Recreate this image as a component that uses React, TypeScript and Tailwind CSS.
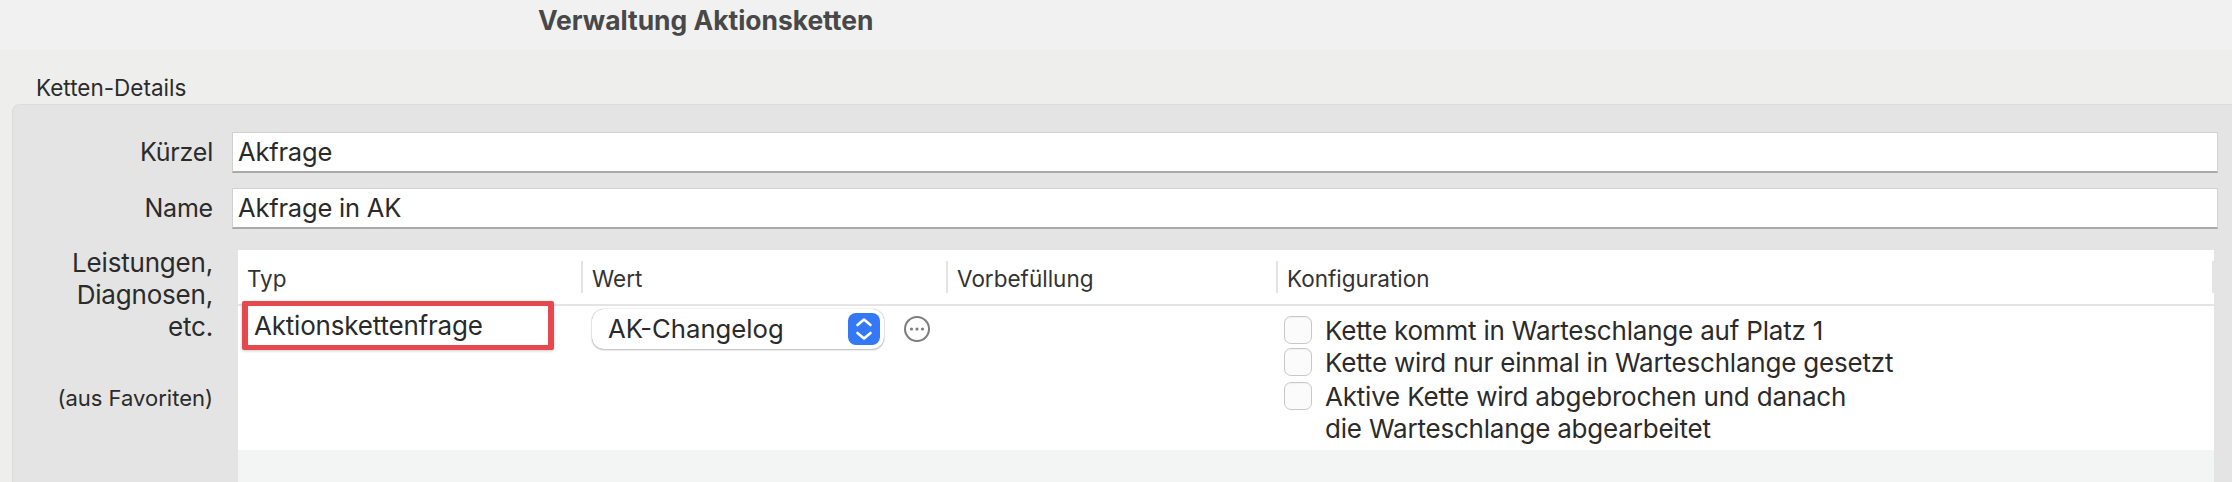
const fontClass = "font-['Inter','Liberation_Sans',sans-serif]"

const columnSeparator = 'h-[32px] w-[2px] bg-[#e4e4e4]'
const fieldLabel = 'w-[200px] text-right text-[25px] leading-[41px] tracking-[-0.2px] text-[#2b2b2b]'
const fieldInput =
  'ml-[19px] flex h-[41px] flex-1 items-center border-t border-x border-[#d2d2d2] border-b-2 border-b-[#a9a9a9] bg-white pl-[5px] text-[25.5px] tracking-[-0.2px] text-[#2a2a2a]'

function HeaderCell({ label, width, last }: { label: string; width: string; last?: boolean }) {
  return (
    <div className={`flex items-center ${width}`}>
      <span className="flex-1 pt-[4px] pl-[9px] text-[22.5px] text-[#333333]">{label}</span>
      {!last && <div className={columnSeparator} />}
    </div>
  )
}

function ConfigOption({ lines, className }: { lines: string[]; className?: string }) {
  return (
    <div className={`flex ${className ?? ''}`}>
      <div className="mt-px h-[28px] w-[28px] rounded-[7px] border border-[#c8c8c8] bg-[#fbfbfb] shadow-[inset_0_1px_1px_rgba(0,0,0,0.04)]" />
      <div className="ml-[13px] text-[26px] leading-[32px] tracking-[-0.2px] text-[#2b2b2b]">
        {lines.map((line) => (
          <div key={line}>{line}</div>
        ))}
      </div>
    </div>
  )
}

export default function App() {
  return (
    <div className={`flex h-[482px] w-[2232px] flex-col overflow-hidden bg-[#eeeeec] ${fontClass}`}>
      {/* Title */}
      <div className="flex h-[50px] shrink-0 items-center bg-[#f1f1f1] pb-[8px] pl-[538px] text-[26.4px] font-bold text-[#484848]">
        Verwaltung Aktionsketten
      </div>

      {/* Section heading */}
      <div className="flex h-[54px] shrink-0 items-end pl-[36px] text-[22.5px] leading-[32px] text-[#2b2b2b]">
        Ketten-Details
      </div>

      {/* Panel */}
      <div className="ml-[12px] min-h-0 flex-1 rounded-tl-[8px] border-t border-l border-[#dcdcda] bg-[#e4e4e4] pt-[27px] pr-[14px]">
        <div className="flex">
          <div className={fieldLabel}>Kürzel</div>
          <div className={fieldInput}>Akfrage</div>
        </div>
        <div className="mt-[15px] flex">
          <div className={fieldLabel}>Name</div>
          <div className={fieldInput}>Akfrage in AK</div>
        </div>

        <div className="mt-[21px] flex">
          <div className="-mt-[3px] w-[200px] text-right text-[26px] leading-[32px] tracking-[-0.2px] text-[#2b2b2b]">
            <div>Leistungen,</div>
            <div>Diagnosen,</div>
            <div>etc.</div>
            <div className="mt-[39px] text-[22px] tracking-normal">(aus Favoriten)</div>
          </div>

          {/* Table */}
          <div className="mr-[4px] ml-[25px] h-[240px] flex-1 bg-[#f3f4f4]">
            <div className="flex h-[56px] items-center border-b-2 border-[#e4e4e4] bg-white">
              <HeaderCell label="Typ" width="w-[345px]" />
              <HeaderCell label="Wert" width="w-[365px]" />
              <HeaderCell label="Vorbefüllung" width="w-[330px]" />
              <HeaderCell label="Konfiguration" width="flex-1" />
            </div>

            <div className="flex h-[144px] bg-white">
              <div className="w-[344px] pl-[4px]">
                <div className="relative -mt-[5px] flex h-[49px] w-[312px] items-center rounded-[2px] border-x-[6px] border-y-[5px] border-[#e5484d] bg-white pl-[6px] text-[26px] tracking-[-0.2px] text-[#2a2a2a] shadow-[0_1px_3px_rgba(0,0,0,0.2)]">
                  Aktionskettenfrage
                </div>
              </div>

              <div className="flex h-[46px] w-[365px] items-start pt-[3px] pl-[10px]">
                <div className="flex h-[40px] w-[292px] items-center justify-between rounded-[12px] bg-white pr-[4px] pl-[16px] text-[25.7px] text-[#2a2a2a] shadow-[0_0_1px_rgba(0,0,0,0.45),0_1px_2px_rgba(0,0,0,0.25)]">
                  <span>AK-Changelog</span>
                  <div className="flex h-[32px] w-[32px] items-center justify-center rounded-[8px] bg-[#3478f6]">
                    <svg width="20" height="26" viewBox="0 0 20 26" fill="none" stroke="white" strokeWidth="2.6" strokeLinecap="round" strokeLinejoin="round">
                      <path d="M3.5 9 10 3.5 16.5 9" />
                      <path d="M3.5 17 10 22.5 16.5 17" />
                    </svg>
                  </div>
                </div>
                <svg className="mt-[7px] ml-[20px]" width="26" height="26" viewBox="0 0 26 26" fill="none">
                  <circle cx="13" cy="13" r="12" stroke="#7d7d7d" strokeWidth="2" />
                  <circle cx="7.5" cy="13" r="1.6" fill="#7d7d7d" />
                  <circle cx="13" cy="13" r="1.6" fill="#7d7d7d" />
                  <circle cx="18.5" cy="13" r="1.6" fill="#7d7d7d" />
                </svg>
              </div>

              <div className="w-[330px]" />

              <div className="flex-1 pt-[9px] pl-[7px]">
                <ConfigOption lines={['Kette kommt in Warteschlange auf Platz 1']} />
                <ConfigOption lines={['Kette wird nur einmal in Warteschlange gesetzt']} />
                <ConfigOption
                  className="mt-[2px]"
                  lines={['Aktive Kette wird abgebrochen und danach', 'die Warteschlange abgearbeitet']}
                />
              </div>
            </div>
          </div>
        </div>
      </div>
    </div>
  )
}
